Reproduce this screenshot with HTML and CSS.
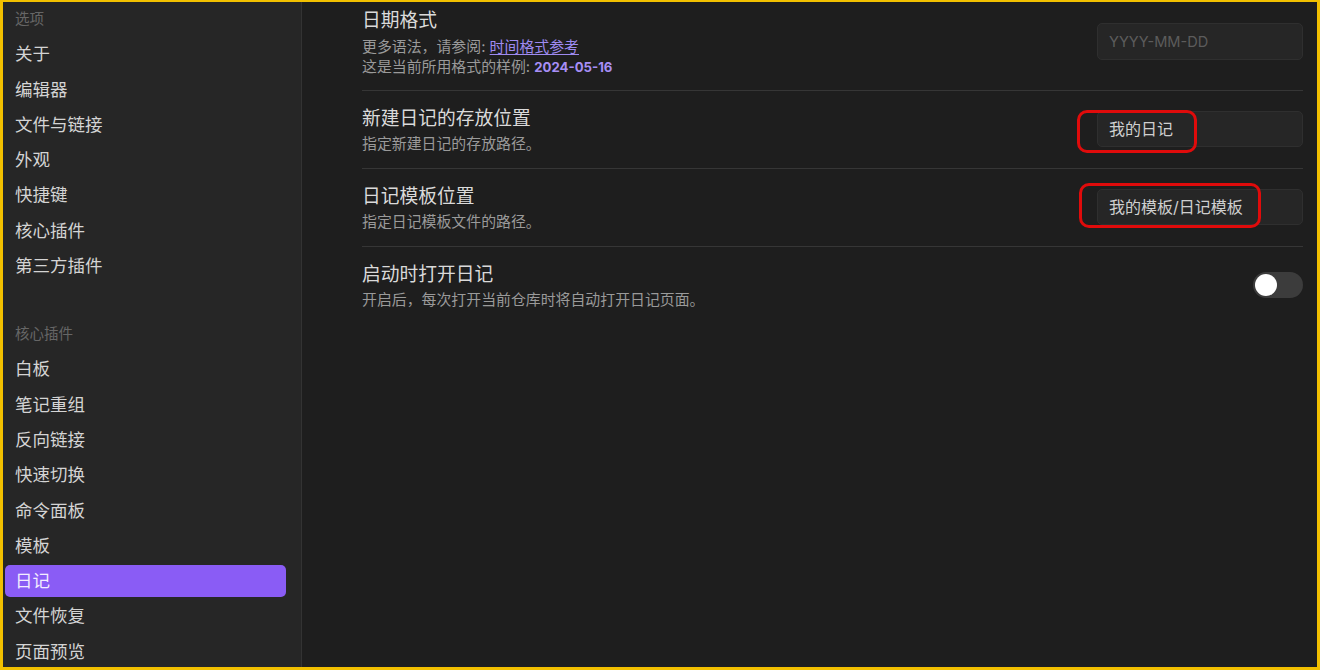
FILE: index.html
```html
<!DOCTYPE html>
<html lang="zh-CN">
<head>
<meta charset="utf-8">
<title>设置 - 日记</title>
<link rel="stylesheet" href="styles.css">
</head>
<body>
<div class="frame">
  <nav class="sidebar">
    <div class="group">
      <div class="group-title">选项</div>
      <div class="nav-item">关于</div>
      <div class="nav-item">编辑器</div>
      <div class="nav-item">文件与链接</div>
      <div class="nav-item">外观</div>
      <div class="nav-item">快捷键</div>
      <div class="nav-item">核心插件</div>
      <div class="nav-item">第三方插件</div>
    </div>
    <div class="group group-second">
      <div class="group-title">核心插件</div>
      <div class="nav-item">白板</div>
      <div class="nav-item">笔记重组</div>
      <div class="nav-item">反向链接</div>
      <div class="nav-item">快速切换</div>
      <div class="nav-item">命令面板</div>
      <div class="nav-item">模板</div>
      <div class="nav-item active">日记</div>
      <div class="nav-item">文件恢复</div>
      <div class="nav-item">页面预览</div>
    </div>
  </nav>
  <main class="content">
    <div class="setting first">
      <div class="info">
        <div class="name">日期格式</div>
        <div class="desc">更多语法，请参阅: <a class="link" href="#">时间格式参考</a></div>
        <div class="desc">这是当前所用格式的样例: <b class="sample">2024-05-16</b></div>
      </div>
      <div class="control">
        <div class="input placeholder">YYYY-MM-DD</div>
      </div>
    </div>
    <div class="setting">
      <div class="info">
        <div class="name">新建日记的存放位置</div>
        <div class="desc">指定新建日记的存放路径。</div>
      </div>
      <div class="control">
        <div class="input">我的日记</div>
        <span class="mark mark-a"></span>
      </div>
    </div>
    <div class="setting">
      <div class="info">
        <div class="name">日记模板位置</div>
        <div class="desc">指定日记模板文件的路径。</div>
      </div>
      <div class="control">
        <div class="input">我的模板/日记模板</div>
        <span class="mark mark-b"></span>
      </div>
    </div>
    <div class="setting">
      <div class="info">
        <div class="name">启动时打开日记</div>
        <div class="desc">开启后，每次打开当前仓库时将自动打开日记页面。</div>
      </div>
      <div class="control">
        <div class="toggle"><span class="knob"></span></div>
      </div>
    </div>
  </main>
</div>
</body>
</html>
```
FILE: styles.css
```css
html, body {
  margin: 0;
  padding: 0;
  width: 1320px;
  height: 670px;
  overflow: hidden;
  background: #1e1e1e;
}

.frame {
  box-sizing: border-box;
  width: 1320px;
  height: 670px;
  border-style: solid;
  border-color: #f2c000;
  border-width: 2px 3px 3px 3px;
  display: flex;
  font-family: Inter, "Noto Sans CJK SC", sans-serif;
  overflow: hidden;
}

.sidebar {
  flex: none;
  width: 299px;
  box-sizing: border-box;
  background: #262626;
  border-right: 1px solid #333333;
  padding: 1px 15px 0 2px;
}

.group {
  display: flex;
  flex-direction: column;
  gap: 3.3px;
}

.group-second {
  margin-top: 36px;
}

.group-title {
  height: 32px;
  line-height: 32px;
  padding-left: 10px;
  font-size: 14.5px;
  color: #666666;
}

.nav-item {
  height: 32px;
  line-height: 32px;
  padding-left: 10px;
  font-size: 17.5px;
  color: #d4d4d4;
  border-radius: 5px;
}

.nav-item.active {
  background: #8a5cf5;
  color: #f3edff;
}

.content {
  flex: 1;
  padding: 0 14px 0 60px;
  background: #1e1e1e;
}

.setting {
  display: flex;
  align-items: center;
  border-top: 1px solid #363636;
  padding: 13px 0 14px;
}

.setting.first {
  border-top: none;
  padding-top: 4px;
}

.info {
  flex: 1;
}

.name {
  font-size: 18.75px;
  line-height: 26px;
  color: #dadada;
  padding-top: 2px;
  margin-bottom: 2px;
}

.first .desc {
  position: relative;
  top: 1px;
}

.desc {
  font-size: 14.9px;
  line-height: 20px;
  color: #9a9a9a;
}

.link {
  color: #9e8af0;
  text-decoration: underline;
  text-underline-offset: 2px;
}

.sample {
  color: #a78ef5;
  font-weight: 700;
  font-size: 13.2px;
}

.control {
  position: relative;
  flex: none;
}

.input {
  box-sizing: border-box;
  width: 206px;
  height: 36px;
  line-height: 34px;
  padding: 0 11px;
  background: #262626;
  border: 1px solid #2f2f2f;
  border-radius: 5px;
  font-size: 16px;
  color: #cfcfcf;
  white-space: nowrap;
}

.input.placeholder {
  height: 37px;
  line-height: 37px;
  color: #5c5c5c;
  font-size: 14.6px;
}

.mark {
  position: absolute;
  border: 3px solid #e00b0b;
  border-radius: 10px;
  box-sizing: border-box;
  pointer-events: none;
}

.mark-a {
  left: -20px;
  top: -1px;
  width: 120px;
  height: 43px;
}

.mark-b {
  left: -18px;
  top: -6px;
  width: 182px;
  height: 45px;
}

.toggle {
  width: 50px;
  height: 26px;
  border-radius: 13px;
  background: #3c3c3c;
  position: relative;
}

.knob {
  position: absolute;
  left: 2px;
  top: 2px;
  width: 22px;
  height: 22px;
  border-radius: 50%;
  background: #ffffff;
}
```
